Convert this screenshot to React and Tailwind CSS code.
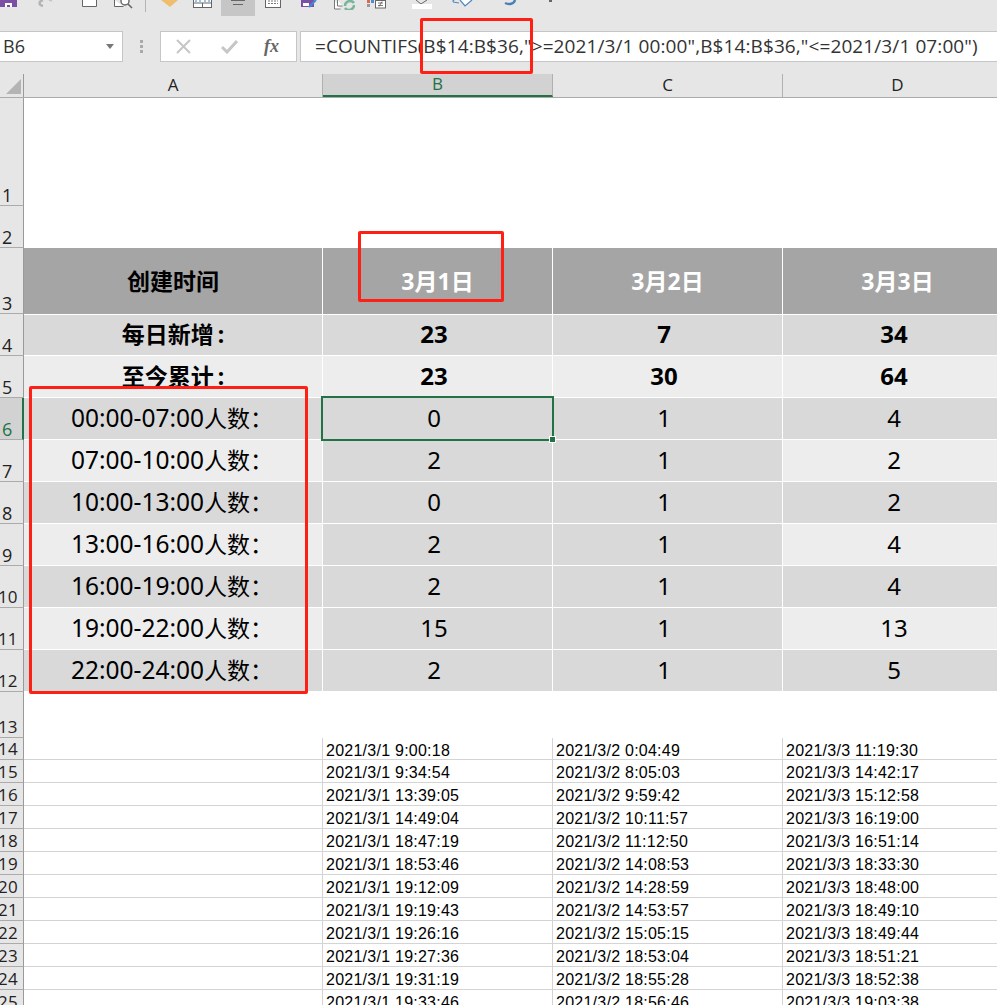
import React from "react";

const ui = "font-['Open_Sans','Noto_Sans',sans-serif]";
const cjk = "font-['Noto_Sans','Noto_Sans_CJK_SC',sans-serif]";

/* =========================
   DATA
========================= */
const summary = [
  { label: "每日新增", vals: ["23", "7", "34"], bg: "bg-[#d9d9d9]" },
  { label: "至今累计", vals: ["23", "30", "64"], bg: "bg-[#ededed]" },
];

const slots = [
  ["00:00-07:00", "0", "1", "4"],
  ["07:00-10:00", "2", "1", "2"],
  ["10:00-13:00", "0", "1", "2"],
  ["13:00-16:00", "2", "1", "4"],
  ["16:00-19:00", "2", "1", "4"],
  ["19:00-22:00", "15", "1", "13"],
  ["22:00-24:00", "2", "1", "5"],
];

const times = [
  ["2021/3/1 9:00:18", "2021/3/2 0:04:49", "2021/3/3 11:19:30"],
  ["2021/3/1 9:34:54", "2021/3/2 8:05:03", "2021/3/3 14:42:17"],
  ["2021/3/1 13:39:05", "2021/3/2 9:59:42", "2021/3/3 15:12:58"],
  ["2021/3/1 14:49:04", "2021/3/2 10:11:57", "2021/3/3 16:19:00"],
  ["2021/3/1 18:47:19", "2021/3/2 11:12:50", "2021/3/3 16:51:14"],
  ["2021/3/1 18:53:46", "2021/3/2 14:08:53", "2021/3/3 18:33:30"],
  ["2021/3/1 19:12:09", "2021/3/2 14:28:59", "2021/3/3 18:48:00"],
  ["2021/3/1 19:19:43", "2021/3/2 14:53:57", "2021/3/3 18:49:10"],
  ["2021/3/1 19:26:16", "2021/3/2 15:05:15", "2021/3/3 18:49:44"],
  ["2021/3/1 19:27:36", "2021/3/2 18:53:04", "2021/3/3 18:51:21"],
  ["2021/3/1 19:31:19", "2021/3/2 18:55:28", "2021/3/3 18:52:38"],
  ["2021/3/1 19:33:46", "2021/3/2 18:56:46", "2021/3/3 19:03:38"],
];

/* =========================
   TOOLBAR ICONS (cut off at the top of the shot)
========================= */
function ToolbarIcons() {
  return (
    <div className="flex h-[19px] items-start overflow-hidden">
      <svg width="17" height="8" className="shrink-0"><rect width="17" height="7" fill="#7b4fa6" /><rect x="5" y="3" width="7" height="4" fill="#fff" /><rect x="7" y="5" width="3" height="2" fill="#7b4fa6" /></svg>
      <svg width="16" height="8" className="ml-[20px] shrink-0"><path d="M6 0C2 1 1 5 6 6" fill="none" stroke="#b4b4b4" strokeWidth="2.5" /><path d="M12 0l3 1" stroke="#c4c4c4" strokeWidth="1.5" /></svg>
      <svg width="15" height="8" className="ml-[29px] shrink-0"><path d="M.5 0v6.5h14V0" fill="#fff" stroke="#666" /></svg>
      <svg width="19" height="9" className="ml-[17px] shrink-0"><path d="M.5 0v6.5h9" fill="#fff" stroke="#666" /><circle cx="11" cy="1" r="4" fill="#fff" stroke="#666" strokeWidth="1.4" /><path d="M14 4l4 4" stroke="#666" strokeWidth="1.6" /></svg>
      <div className="ml-[12px] h-[12px] w-px shrink-0 bg-[#b4b4b4]" />
      <svg width="17" height="8" className="ml-[15px] shrink-0"><path d="M0 0h17L9 7z" fill="#f0bd6c" /></svg>
      <svg width="19" height="8" className="ml-[15px] shrink-0"><rect x=".5" y="-3" width="18" height="10.5" fill="#fff" stroke="#666" /><path d="M0 3h19M9.500 3v5" stroke="#666" /><path d="M3 0v2M7 0v2M12 0v2M16 0v2" stroke="#2f86c8" /></svg>
      <div className="ml-[9px] flex h-[16px] w-[34px] shrink-0 flex-col items-center gap-[3px] bg-[#c6c6c6]">
        <div className="h-px w-[14px] bg-[#666]" />
        <div className="h-px w-[10px] bg-[#666]" />
      </div>
      <svg width="16" height="8" className="ml-[10px] shrink-0"><rect x=".5" y="-3" width="15" height="10.5" fill="#fff" stroke="#666" /><path d="M3 1h10M3 3.500h10" stroke="#777" strokeDasharray="2 1" /></svg>
      <svg width="18" height="8" className="ml-[20px] shrink-0"><rect width="13" height="7" fill="#7b4fa6" /><rect x="2" y="3" width="6" height="3" fill="#fff" /><path d="M8 7L15 0" stroke="#3c8ed0" strokeWidth="2" /></svg>
      <svg width="21" height="10" className="ml-[15px] shrink-0"><path d="M.5 0v9h6" fill="#fff" stroke="#777" /><path d="M3.500 0v6h5" fill="#fff" stroke="#777" /><path d="M11 6a5 5 0 0 1 9-3M20 5a5 5 0 0 1-9 3" fill="none" stroke="#78b59a" strokeWidth="2.4" /></svg>
      <svg width="19" height="9" className="ml-[12px] shrink-0"><rect x="0" y="0" width="3" height="3" fill="#d9694c" /><rect x="4" y="0" width="3" height="3" fill="#4c8fce" /><rect x="0" y="4" width="3" height="3" fill="#999" /><rect x="8.500" y=".5" width="10" height="7.500" fill="#fff" stroke="#666" /><path d="M11 3h5M11 5.500h5M15 1.500l-3 5" stroke="#555" strokeWidth=".8" /></svg>
      <div className="relative ml-[26px] h-[9px] w-[20px] shrink-0">
        <svg width="16" height="5" className="absolute left-[2px] top-0"><path d="M2 0l5 4 6-4" fill="none" stroke="#666" /></svg>
        <div className="absolute left-0 top-[4px] h-[5px] w-[20px] bg-white" />
      </div>
      <svg width="24" height="10" className="ml-[20px] shrink-0"><path d="M.5 1.500L2 0M8 0l5 6 7-6" fill="#fff" stroke="#4a86c0" strokeWidth="1.2" /><path d="M1 2l6 1" stroke="#4a86c0" /></svg>
      <svg width="16" height="7" className="ml-[26px] shrink-0"><path d="M3 3c4 2 9 1 10-3" fill="none" stroke="#4a7fb5" strokeWidth="2.4" /></svg>
      <svg width="3" height="3" className="ml-[31px] shrink-0"><rect width="3" height="2" fill="#666" /></svg>
    </div>
  );
}

function FormulaBar() {
  return (
    <div className={`flex h-[31px] mt-[12px] items-stretch ${ui}`}>
      <div className="flex w-[123px] items-center justify-between border-y border-r border-[#c6c6c6] bg-white pl-[3px] pr-[8px] text-[18px] text-[#333]">
        <span>B6</span>
        <svg width="8" height="5"><path d="M0 0h8L4 5z" fill="#777" /></svg>
      </div>
      <div className="flex w-[37px] flex-col items-center justify-center gap-[2px]">
        <div className="h-[3px] w-[3px] bg-[#aaa]" />
        <div className="h-[3px] w-[3px] bg-[#aaa]" />
        <div className="h-[3px] w-[3px] bg-[#aaa]" />
      </div>
      <div className="flex w-[137px] items-center border border-[#c6c6c6] bg-white pl-[15px]">
        <svg width="15" height="15" viewBox="0 0 15 15"><path d="M1 1l13 13M14 1L1 14" stroke="#c6c6c6" strokeWidth="2" /></svg>
        <svg width="17" height="14" viewBox="0 0 17 14" className="ml-[30px]"><path d="M1 7l5 5L16 1" fill="none" stroke="#c6c6c6" strokeWidth="3" /></svg>
        <span className="ml-[26px] font-['Liberation_Serif',serif] text-[18px] font-bold italic text-[#666]">fx</span>
      </div>
      <div className="ml-[3px] flex flex-1 items-center overflow-hidden whitespace-nowrap border-y border-l border-[#c6c6c6] bg-white pl-[14px] text-[19px] tracking-[0.1px] text-[#333]">
        =COUNTIFS(B$14:B$36,"&gt;=2021/3/1 00:00",B$14:B$36,"&lt;=2021/3/1 07:00")
      </div>
    </div>
  );
}

function ColHead({ label, className }) {
  return (
    <div className={`flex shrink-0 items-center justify-center border-r border-[#b0b0b0] pb-[2px] ${className}`}>
      {label}
    </div>
  );
}

/* row number sits at the bottom of its header cell, two digits overrun the left edge */
function RowNo({ n, active }) {
  const two = n > 9;
  return (
    <div
      className={`flex h-full w-[24px] shrink-0 items-end overflow-hidden whitespace-nowrap border-b border-r border-b-[#ababab] border-r-[#9a9a9a] font-normal leading-[20px] ${ui} ${
        two ? "text-[17px]" : "pl-[2px] text-[18px]"
      } ${active ? "bg-[#d2d2d2] border-r-2 border-r-[#217346] text-[#217346]" : "bg-[#e6e6e6] text-[#222]"}`}
    >
      <span className={two ? "-ml-[2px]" : ""}>{n}</span>
    </div>
  );
}

function Cell({ w, className = "", children }) {
  return (
    <div className={`flex h-full shrink-0 items-center justify-center border-r border-white ${w} ${className}`}>
      {children}
    </div>
  );
}

const colA = "w-[299px]";
const colB = "w-[230px]";
const colC = "w-[230px]";
const colD = "w-[230px]";

export default function App() {
  return (
    <div className="relative h-[1005px] w-[997px] overflow-hidden bg-white text-black">
      {/* top chrome */}
      <div className="h-[74px] bg-[#e6e6e6]">
        <ToolbarIcons />
        <FormulaBar />
      </div>

      {/* column letters */}
      <div className={`flex h-[23px] bg-[#e6e6e6] text-[17px] text-[#222] ${ui}`}>
        <div className="relative w-[24px] shrink-0 border-r border-[#9a9a9a]">
          <div className="absolute bottom-[3px] right-[2px] h-0 w-0 border-b-[15px] border-l-[15px] border-b-[#b4b4b4] border-l-transparent" />
        </div>
        <ColHead label="A" className={colA} />
        <ColHead label="B" className={`${colB} border-b-2 border-b-[#217346] bg-[#d2d2d2] text-[#217346]`} />
        <ColHead label="C" className={colC} />
        <ColHead label="D" className={colD} />
      </div>
      <div className="h-px bg-[#ababab]" />

      {/* rows 1-2 blank */}
      <div className="flex h-[108px]"><RowNo n={1} /></div>
      <div className="flex h-[42px]"><RowNo n={2} /></div>

      {/* row 3 heading */}
      <div className={`flex h-[66px] text-[23px] font-bold ${cjk}`}>
        <RowNo n={3} />
        <div className="flex h-full flex-1 items-start">
          <Cell w={colA} className="h-[64px] bg-[#a5a5a5]">创建时间</Cell>
          <Cell w={colB} className="h-[64px] bg-[#a5a5a5] text-white">3月1日</Cell>
          <Cell w={colC} className="h-[64px] bg-[#a5a5a5] text-white">3月2日</Cell>
          <Cell w={colD} className="h-[64px] bg-[#a5a5a5] text-white">3月3日</Cell>
        </div>
      </div>

      {/* rows 4-5 totals */}
      {summary.map((row, i) => (
        <div key={row.label} className={`flex h-[42px] text-[23px] font-bold ${cjk}`}>
          <RowNo n={i + 4} />
          <div className="flex h-full flex-1 flex-col">
            {i === 0 && <div className="h-px bg-white" />}
            <div className="flex min-h-0 flex-1">
              <Cell w={colA} className={`${row.bg} pb-px`}>
                {row.label}<span className="ml-[4px]">:</span>
              </Cell>
              <Cell w={colB} className={`${row.bg} pb-[2px] pr-[7px] text-[24px]`}>{row.vals[0]}</Cell>
              <Cell w={colC} className={`${row.bg} pb-[2px] pr-[7px] text-[24px]`}>{row.vals[1]}</Cell>
              <Cell w={colD} className={`${row.bg} pb-[2px] pr-[7px] text-[24px]`}>{row.vals[2]}</Cell>
            </div>
            <div className="h-px bg-white" />
          </div>
        </div>
      ))}

      {/* rows 6-12 time slots */}
      {slots.map((row, i) => {
        const labelBg = i % 2 === 0 ? "bg-[#d9d9d9]" : "bg-[#ededed]";
        return (
          <div key={row[0]} className={`flex h-[42px] text-[23px] ${cjk}`}>
            <RowNo n={i + 6} active={i === 0} />
            <div className="flex h-full flex-1 flex-col">
              <div className="flex min-h-0 flex-1">
                <Cell w={colA} className={`${labelBg} pr-[2px]`}>
                  <span className="text-[24.5px]">{row[0]}</span>人数：
                </Cell>
                <Cell w={colB} className="bg-[#d9d9d9] pb-px pr-[7px] text-[24px]">{row[1]}</Cell>
                <Cell w={colC} className="bg-[#d9d9d9] pb-px pr-[7px] text-[24px]">{row[2]}</Cell>
                <Cell w={colD} className={`${labelBg} pb-px pr-[7px] text-[24px]`}>{row[3]}</Cell>
              </div>
              <div className="h-px bg-white" />
            </div>
          </div>
        );
      })}

      {/* row 13 blank */}
      <div className="flex h-[46px]"><RowNo n={13} /></div>

      {/* rows 14+ raw timestamps */}
      {times.map((row, i) => (
        <div key={row[0]} className={`flex ${i === 0 ? "h-[22px]" : "h-[23px]"} font-['Liberation_Sans',sans-serif] text-[16px] tracking-[0.25px]`}>
          <RowNo n={i + 14} />
          <div className="flex h-full flex-1 border-b border-[#d4d4d4]">
            <div className="w-[298px] shrink-0" />
            {row.map((t) => (
              <div key={t} className="w-[230px] shrink-0 border-l border-[#d4d4d4] pl-[3px] pt-px leading-[23px]">{t}</div>
            ))}
          </div>
        </div>
      ))}

      {/* selected cell B6 */}
      <div className="absolute left-[321px] top-[396px] h-[45px] w-[233px] border-2 border-[#217346]">
        <div className="absolute -bottom-[4px] -right-[4px] h-[7px] w-[7px] border border-white bg-[#217346]" />
      </div>

      {/* red annotation boxes */}
      <div className="absolute left-[420px] top-[18px] h-[56px] w-[113px] rounded-[2px] border-[3px] border-[#fe2015]" />
      <div className="absolute left-[358px] top-[231px] h-[71px] w-[146px] rounded-[2px] border-[3px] border-[#fe2015]" />
      <div className="absolute left-[29px] top-[386px] h-[308px] w-[279px] rounded-[2px] border-[3px] border-[#fe2015]" />
    </div>
  );
}
